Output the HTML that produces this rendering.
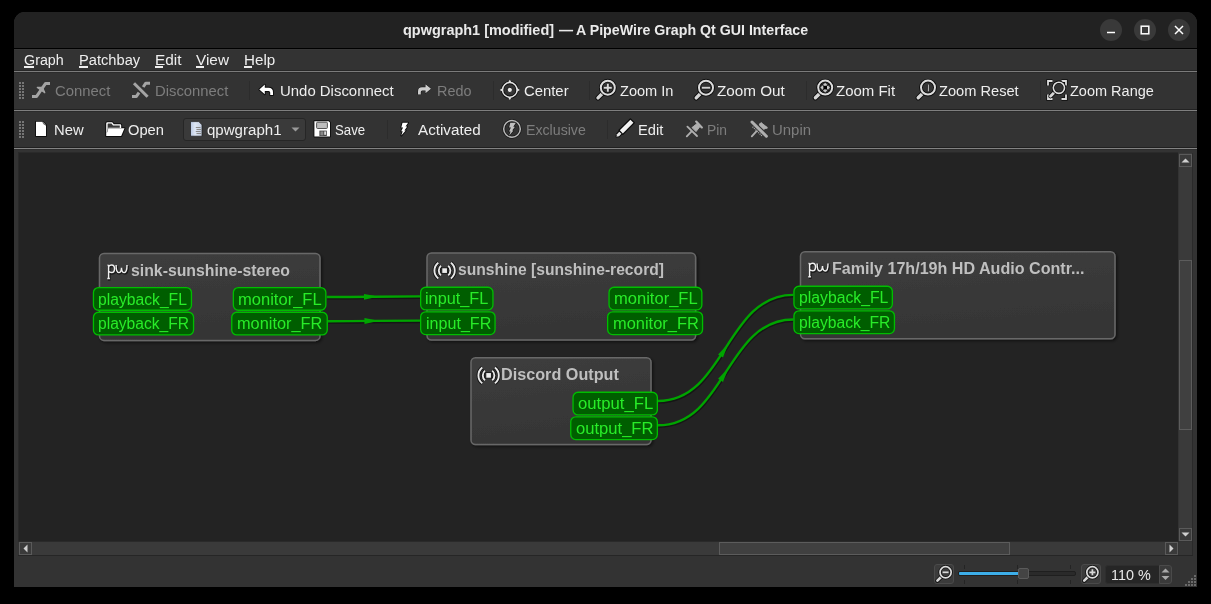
<!DOCTYPE html><html><head><meta charset="utf-8"><style>
html,body{margin:0;padding:0}
body{width:1211px;height:604px;background:#000;position:relative;overflow:hidden;font-family:"Liberation Sans",sans-serif}
body>div{position:absolute}
.t{position:absolute;white-space:nowrap;line-height:1;transform-origin:0 0}
svg{position:absolute;overflow:visible}
</style></head><body>
<div style="left:14px;top:12px;width:1183px;height:575px;background:#333333;border-radius:11px 11px 0 0"></div>
<div style="left:14px;top:12px;width:1183px;height:36px;background:#222222;border-radius:11px 11px 0 0"></div>
<div style="left:14px;top:48px;width:1183px;height:1px;background:#000000;"></div>
<div style="left:14px;top:49px;width:1183px;height:1px;background:#383838;"></div>
<div style="left:14px;top:70px;width:1183px;height:1px;background:#272727;"></div>
<div style="left:14px;top:71px;width:1183px;height:1px;background:#7b7b7b;"></div>
<div style="left:14px;top:72px;width:1183px;height:1px;background:#2b2b2b;"></div>
<div style="left:14px;top:109px;width:1183px;height:1px;background:#222222;"></div>
<div style="left:14px;top:110px;width:1183px;height:1px;background:#7f7f7f;"></div>
<div style="left:14px;top:111px;width:1183px;height:1px;background:#2b2b2b;"></div>
<div style="left:14px;top:147px;width:1183px;height:1px;background:#202020;"></div>
<div style="left:14px;top:148px;width:1183px;height:1px;background:#838383;"></div>
<div style="left:14px;top:149px;width:1183px;height:1px;background:#2d2d2d;"></div>
<div class="t" style="left:403.30px;top:22.53px;font-size:14.67px;font-weight:bold;color:#eaeaea;transform:scaleX(0.9868);">qpwgraph1 [modified]</div>
<div class="t" style="left:558.50px;top:22.53px;font-size:14.67px;font-weight:bold;color:#eaeaea;transform:scaleX(0.9611);">—</div>
<div class="t" style="left:576.40px;top:22.53px;font-size:14.67px;font-weight:bold;color:#eaeaea;transform:scaleX(0.9688);">A PipeWire Graph Qt GUI Interface</div>
<div style="left:1100px;top:19px;width:22px;height:22px;border-radius:50%;background:#393939"></div>
<div style="left:1134px;top:19px;width:22px;height:22px;border-radius:50%;background:#393939"></div>
<div style="left:1168px;top:19px;width:22px;height:22px;border-radius:50%;background:#393939"></div>
<svg style="position:absolute;left:1100px;top:19px" width="22" height="22" viewBox="0 0 22 22"><line x1="7" y1="13.5" x2="15" y2="13.5" stroke="#fff" stroke-width="1.5"/></svg>
<svg style="position:absolute;left:1134px;top:19px" width="22" height="22" viewBox="0 0 22 22"><rect x="7.2" y="7.2" width="7.6" height="7.6" fill="none" stroke="#fff" stroke-width="1.5"/></svg>
<svg style="position:absolute;left:1168px;top:19px" width="22" height="22" viewBox="0 0 22 22"><path d="M7 7L15 15M15 7L7 15" stroke="#fff" stroke-width="1.5"/></svg>
<div class="t" style="left:24.40px;top:52.53px;font-size:14.67px;font-weight:normal;color:#eeeeee;transform:scaleX(0.9759);">Graph</div>
<div style="left:24px;top:66px;width:10px;height:2px;background:#eeeeee;"></div>
<div class="t" style="left:79.30px;top:52.53px;font-size:14.67px;font-weight:normal;color:#eeeeee;transform:scaleX(1.0004);">Patchbay</div>
<div style="left:79px;top:66px;width:9px;height:2px;background:#eeeeee;"></div>
<div class="t" style="left:155.20px;top:52.53px;font-size:14.67px;font-weight:normal;color:#eeeeee;transform:scaleX(1.0511);">Edit</div>
<div style="left:155px;top:66px;width:8px;height:2px;background:#eeeeee;"></div>
<div class="t" style="left:196.20px;top:52.53px;font-size:14.67px;font-weight:normal;color:#eeeeee;transform:scaleX(1.0463);">View</div>
<div style="left:196px;top:66px;width:8px;height:2px;background:#eeeeee;"></div>
<div class="t" style="left:244.20px;top:52.53px;font-size:14.67px;font-weight:normal;color:#eeeeee;transform:scaleX(1.0349);">Help</div>
<div style="left:244px;top:66px;width:8px;height:2px;background:#eeeeee;"></div>
<div style="left:19px;top:82px;width:2px;height:2px;background:#767676;"></div>
<div style="left:22px;top:82px;width:2px;height:2px;background:#767676;"></div>
<div style="left:19px;top:85px;width:2px;height:2px;background:#767676;"></div>
<div style="left:22px;top:85px;width:2px;height:2px;background:#767676;"></div>
<div style="left:19px;top:88px;width:2px;height:2px;background:#767676;"></div>
<div style="left:22px;top:88px;width:2px;height:2px;background:#767676;"></div>
<div style="left:19px;top:91px;width:2px;height:2px;background:#767676;"></div>
<div style="left:22px;top:91px;width:2px;height:2px;background:#767676;"></div>
<div style="left:19px;top:94px;width:2px;height:2px;background:#767676;"></div>
<div style="left:22px;top:94px;width:2px;height:2px;background:#767676;"></div>
<div style="left:19px;top:97px;width:2px;height:2px;background:#767676;"></div>
<div style="left:22px;top:97px;width:2px;height:2px;background:#767676;"></div>
<div style="left:19px;top:121px;width:2px;height:2px;background:#767676;"></div>
<div style="left:22px;top:121px;width:2px;height:2px;background:#767676;"></div>
<div style="left:19px;top:124px;width:2px;height:2px;background:#767676;"></div>
<div style="left:22px;top:124px;width:2px;height:2px;background:#767676;"></div>
<div style="left:19px;top:127px;width:2px;height:2px;background:#767676;"></div>
<div style="left:22px;top:127px;width:2px;height:2px;background:#767676;"></div>
<div style="left:19px;top:130px;width:2px;height:2px;background:#767676;"></div>
<div style="left:22px;top:130px;width:2px;height:2px;background:#767676;"></div>
<div style="left:19px;top:133px;width:2px;height:2px;background:#767676;"></div>
<div style="left:22px;top:133px;width:2px;height:2px;background:#767676;"></div>
<div style="left:19px;top:136px;width:2px;height:2px;background:#767676;"></div>
<div style="left:22px;top:136px;width:2px;height:2px;background:#767676;"></div>
<div style="left:249px;top:81px;width:1px;height:19px;background:#2c2c2c;"></div>
<div style="left:493px;top:81px;width:1px;height:19px;background:#2c2c2c;"></div>
<div style="left:589px;top:81px;width:1px;height:19px;background:#2c2c2c;"></div>
<div style="left:806px;top:81px;width:1px;height:19px;background:#2c2c2c;"></div>
<div style="left:1040px;top:81px;width:1px;height:19px;background:#2c2c2c;"></div>
<div style="left:387px;top:120px;width:1px;height:19px;background:#2c2c2c;"></div>
<div style="left:607px;top:120px;width:1px;height:19px;background:#2c2c2c;"></div>
<div class="t" style="left:54.60px;top:83.53px;font-size:14.67px;font-weight:normal;color:#7d7d7d;transform:scaleX(1.0138);">Connect</div>
<div class="t" style="left:155.00px;top:83.53px;font-size:14.67px;font-weight:normal;color:#7d7d7d;transform:scaleX(1.0118);">Disconnect</div>
<div class="t" style="left:279.50px;top:83.53px;font-size:14.67px;font-weight:normal;color:#eeeeee;transform:scaleX(1.0187);">Undo Disconnect</div>
<div class="t" style="left:437.30px;top:83.53px;font-size:14.67px;font-weight:normal;color:#7d7d7d;transform:scaleX(0.9840);">Redo</div>
<div class="t" style="left:523.60px;top:83.53px;font-size:14.67px;font-weight:normal;color:#eeeeee;transform:scaleX(1.0134);">Center</div>
<div class="t" style="left:619.60px;top:83.53px;font-size:14.67px;font-weight:normal;color:#eeeeee;transform:scaleX(0.9937);">Zoom In</div>
<div class="t" style="left:717.30px;top:83.53px;font-size:14.67px;font-weight:normal;color:#eeeeee;transform:scaleX(1.0397);">Zoom Out</div>
<div class="t" style="left:836.40px;top:83.53px;font-size:14.67px;font-weight:normal;color:#eeeeee;transform:scaleX(1.0212);">Zoom Fit</div>
<div class="t" style="left:939.30px;top:83.53px;font-size:14.67px;font-weight:normal;color:#eeeeee;transform:scaleX(0.9978);">Zoom Reset</div>
<div class="t" style="left:1070.00px;top:83.53px;font-size:14.67px;font-weight:normal;color:#eeeeee;transform:scaleX(0.9895);">Zoom Range</div>
<div class="t" style="left:54.40px;top:122.53px;font-size:14.67px;font-weight:normal;color:#eeeeee;transform:scaleX(1.0097);">New</div>
<div class="t" style="left:128.40px;top:122.53px;font-size:14.67px;font-weight:normal;color:#eeeeee;transform:scaleX(1.0037);">Open</div>
<div class="t" style="left:335.20px;top:122.53px;font-size:14.67px;font-weight:normal;color:#eeeeee;transform:scaleX(0.9029);">Save</div>
<div class="t" style="left:417.50px;top:122.53px;font-size:14.67px;font-weight:normal;color:#eeeeee;transform:scaleX(1.0386);">Activated</div>
<div class="t" style="left:525.70px;top:122.53px;font-size:14.67px;font-weight:normal;color:#7d7d7d;transform:scaleX(0.9664);">Exclusive</div>
<div class="t" style="left:637.60px;top:122.53px;font-size:14.67px;font-weight:normal;color:#eeeeee;transform:scaleX(0.9998);">Edit</div>
<div class="t" style="left:707.30px;top:122.53px;font-size:14.67px;font-weight:normal;color:#7d7d7d;transform:scaleX(0.9435);">Pin</div>
<div class="t" style="left:771.90px;top:122.53px;font-size:14.67px;font-weight:normal;color:#7d7d7d;transform:scaleX(1.0192);">Unpin</div>
<div style="left:183px;top:118px;width:121px;height:21px;background:#3a3a3a;border:1px solid #262626;border-radius:3px"></div>
<div class="t" style="left:207.20px;top:122.53px;font-size:14.67px;font-weight:normal;color:#eeeeee;transform:scaleX(1.0273);">qpwgraph1</div>
<svg style="position:absolute;left:290px;top:126px" width="12" height="8" viewBox="0 0 12 8"><path d="M1.5 1.5L9.5 1.5L5.5 5.5Z" fill="#9a9a9a"/></svg>
<svg style="left:0;top:0" width="1211" height="604"><g opacity="0.85"><path d="M32 96.4H36.6L45.6 83.4H50" fill="none" stroke="#b8b8b8" stroke-width="3" stroke-linejoin="round"/><path d="M37.3 87.4L42.6 87.4L44.8 92.8Z" fill="#b8b8b8" stroke="#b8b8b8" stroke-width="1.2" stroke-linejoin="round"/></g><g opacity="0.85"><path d="M134 83.2L147.6 96.7" fill="none" stroke="#b8b8b8" stroke-width="3"/><path d="M143.2 87L145.8 83.2H150" fill="none" stroke="#b8b8b8" stroke-width="3" stroke-linejoin="round"/><path d="M132 96.4H136.4L139 92.6" fill="none" stroke="#b8b8b8" stroke-width="3" stroke-linejoin="round"/></g><path d="M259.3 89.5L264.8 84.6V87.7H268.5Q273 87.7 273 92.2V95H270.2V92.5Q270.2 91 268.6 91H264.8V94.3Z" fill="#000" stroke="#000" stroke-width="1.8" stroke-linejoin="round" opacity="0.75"/><path d="M259.3 89.5L264.8 84.6V87.7H268.5Q273 87.7 273 92.2V95H270.2V92.5Q270.2 91 268.6 91H264.8V94.3Z" fill="#ffffff" stroke="none" /><g opacity="0.85"><path d="M431 88.7L425.5 84.3V87.3H422Q418 87.3 418 91.5V94.5H420.8V92Q420.8 90.5 422.2 90.5H425.5V93.3Z" fill="#000" stroke="#000" stroke-width="1.0" stroke-linejoin="round" opacity="0.75"/><path d="M431 88.7L425.5 84.3V87.3H422Q418 87.3 418 91.5V94.5H420.8V92Q420.8 90.5 422.2 90.5H425.5V93.3Z" fill="#e8e8e8" stroke="none" /></g><circle cx="509.8" cy="89.9" r="7.3" fill="none" stroke="#000" stroke-width="3.2" opacity="0.75"/><circle cx="509.8" cy="89.9" r="7.3" fill="none" stroke="#e4e4e4" stroke-width="1.5"/><path d="M509.8 79.8L511.6 82.6H508Z M509.8 100L511.6 97.2H508Z M499.8 89.9L502.6 88.1V91.7Z M519.8 89.9L517 88.1V91.7Z" fill="#e4e4e4"/><circle cx="509.8" cy="89.9" r="2.6" fill="#e8e8e8" stroke="#000" stroke-width="0.8"/><path d="M598.0 97.9L602.5999999999999 93.3" stroke="#000" stroke-width="5.2" stroke-linecap="round" opacity="0.75"/><path d="M598.0 97.9L602.5999999999999 93.3" stroke="#d6d6d6" stroke-width="3.4" stroke-linecap="round"/><circle cx="607.8" cy="87.7" r="7" fill="none" stroke="#000" stroke-width="3.8" opacity="0.8"/><circle cx="607.8" cy="87.7" r="7" fill="none" stroke="#dcdcdc" stroke-width="2"/><path d="M603.8 87.7H611.8M607.8 83.7V91.7" stroke="#000" stroke-width="3.6" opacity="0.6"/><path d="M603.8 87.7H611.8M607.8 83.7V91.7" stroke="#d8d8d8" stroke-width="2"/><path d="M696.2 97.9L700.8 93.3" stroke="#000" stroke-width="5.2" stroke-linecap="round" opacity="0.75"/><path d="M696.2 97.9L700.8 93.3" stroke="#d6d6d6" stroke-width="3.4" stroke-linecap="round"/><circle cx="706" cy="87.7" r="7" fill="none" stroke="#000" stroke-width="3.8" opacity="0.8"/><circle cx="706" cy="87.7" r="7" fill="none" stroke="#dcdcdc" stroke-width="2"/><path d="M701.9 87.7H710.1" stroke="#000" stroke-width="3.6" opacity="0.6"/><path d="M701.9 87.7H710.1" stroke="#d0d0d0" stroke-width="2"/><path d="M815.4000000000001 97.8L820.0 93.19999999999999" stroke="#000" stroke-width="5.2" stroke-linecap="round" opacity="0.75"/><path d="M815.4000000000001 97.8L820.0 93.19999999999999" stroke="#d6d6d6" stroke-width="3.4" stroke-linecap="round"/><circle cx="825.2" cy="87.6" r="7" fill="none" stroke="#000" stroke-width="3.8" opacity="0.8"/><circle cx="825.2" cy="87.6" r="7" fill="none" stroke="#dcdcdc" stroke-width="2"/><path d="M825.2 82.8L830 87.6L825.2 92.4L820.4 87.6Z" fill="#c4c4c4"/><path d="M821.8 84.2L828.6 91M828.6 84.2L821.8 91" stroke="#000" stroke-width="0.9"/><rect x="823.4" y="85.8" width="3.6" height="3.6" fill="#000"/><path d="M918.2 97.8L922.8 93.19999999999999" stroke="#000" stroke-width="5.2" stroke-linecap="round" opacity="0.75"/><path d="M918.2 97.8L922.8 93.19999999999999" stroke="#d6d6d6" stroke-width="3.4" stroke-linecap="round"/><circle cx="928" cy="87.6" r="7" fill="none" stroke="#000" stroke-width="3.8" opacity="0.8"/><circle cx="928" cy="87.6" r="7" fill="none" stroke="#dcdcdc" stroke-width="2"/><path d="M927.6 84.8L929.2 83.6V91.8H927.4Z" fill="#d8d8d8" stroke="#000" stroke-width="0.6"/><path d="M1048 85.5V81H1052.5 M1061.5 81H1066V85.5 M1048 94.5V99H1052.5 M1061.5 99H1066V94.5" fill="none" stroke="#000" stroke-width="3.4" opacity="0.75"/><path d="M1048 85.5V81H1052.5 M1061.5 81H1066V85.5 M1048 94.5V99H1052.5 M1061.5 99H1066V94.5" fill="none" stroke="#dedede" stroke-width="1.8"/><path d="M1050.5 96.3L1054.2 92.6" stroke="#000" stroke-width="4.4" stroke-linecap="round" opacity="0.75"/><path d="M1050.5 96.3L1054.2 92.6" stroke="#d6d6d6" stroke-width="2.8" stroke-linecap="round"/><circle cx="1058.9" cy="87.8" r="5.6" fill="none" stroke="#000" stroke-width="3.2" opacity="0.8"/><circle cx="1058.9" cy="87.8" r="5.6" fill="none" stroke="#dedede" stroke-width="1.6"/><path d="M36 121.8H42.6L46 125.2V136H36Z" fill="#000" stroke="#000" stroke-width="1.8" stroke-linejoin="round" opacity="0.75"/><path d="M36 121.8H42.6L46 125.2V136H36Z" fill="#ffffff" stroke="none" /><path d="M42.6 121.8Q43.2 124.8 46 125.2" fill="#cfcfcf" stroke="#333" stroke-width="0.6"/><path d="M106.2 136V123.6Q106.2 122.3 107.5 122.3H112.2L113.8 124.2H120.2Q121.2 124.2 121.2 125.2V128H108.2L106.9 131.5V136Z M108 128.2H124.5L121.2 136H106.2Z" fill="#000" stroke="#000" stroke-width="2.0" stroke-linejoin="round" opacity="0.75"/><path d="M106.2 136V123.6Q106.2 122.3 107.5 122.3H112.2L113.8 124.2H120.2Q121.2 124.2 121.2 125.2V128H108.2L106.9 131.5V136Z M108 128.2H124.5L121.2 136H106.2Z" fill="#ffffff" stroke="none" /><path d="M107.6 133V124.2Q107.6 123.6 108.2 123.6H111.5L113 125.4H119.8V127.8H108.3Z" fill="#3a3a3a"/><path d="M108.6 129.4H123L120.5 134.6H107.4Z" fill="#ffffff"/><defs><linearGradient id="dg" x1="0" y1="0" x2="1" y2="0"><stop offset="0" stop-color="#b9c8e2"/><stop offset="0.4" stop-color="#dde6f4"/><stop offset="1" stop-color="#c2cde0"/></linearGradient></defs><path d="M190.5 121.6H198.8L202 124.8V136.2H190.5Z" fill="url(#dg)" stroke="#1a1a1a" stroke-width="0.7"/><path d="M195.8 127.5h4.8M196.5 129.5h5M195.8 131.5h4.8M196.5 133.5h5" stroke="#8a8a8a" stroke-width="1.2"/><path d="M314.4 121.2H328.6L330 122.6V136.6H314.4Z" fill="#000" stroke="#000" stroke-width="1.8" stroke-linejoin="round" opacity="0.75"/><path d="M314.4 121.2H328.6L330 122.6V136.6H314.4Z" fill="#ffffff" stroke="none" /><rect x="316.6" y="122.2" width="10.8" height="6.3" rx="1" fill="#bdbdbd" stroke="#444" stroke-width="0.9"/><rect x="319.4" y="130.6" width="7.4" height="5.4" fill="#444"/><rect x="320.4" y="131.4" width="3" height="4" fill="#888"/><rect x="324.2" y="131.4" width="1.8" height="3.4" fill="#ddd"/><path d="M402.5 122.7h5.6l-2.6 3.9h1.7l-2.8 3.9h1.3l-4.4 5.1 1.4-4.3h-1.5l1.9-3.9h-1.8z" fill="#000" stroke="#000" stroke-width="1.8" stroke-linejoin="round" opacity="0.75"/><path d="M402.5 122.7h5.6l-2.6 3.9h1.7l-2.8 3.9h1.3l-4.4 5.1 1.4-4.3h-1.5l1.9-3.9h-1.8z" fill="#ffffff" stroke="none" /><g opacity="0.85"><circle cx="512" cy="128.9" r="8.3" fill="none" stroke="#000" stroke-width="3" opacity="0.6"/><circle cx="512" cy="128.9" r="8.3" fill="none" stroke="#d0d0d0" stroke-width="1.5"/><path d="M510.3 122.8h5.6l-2.6 3.9h1.7l-2.8 3.9h1.3l-4.4 5.1 1.4-4.3h-1.5l1.9-3.9h-1.8z" fill="#000" stroke="#000" stroke-width="1.2" stroke-linejoin="round" opacity="0.75"/><path d="M510.3 122.8h5.6l-2.6 3.9h1.7l-2.8 3.9h1.3l-4.4 5.1 1.4-4.3h-1.5l1.9-3.9h-1.8z" fill="#d8d8d8" stroke="none" /></g><g transform="translate(624.5 128.7) rotate(-45)"><path d="M-11.6 0L-9.2 -1.8H-5.5V1.8H-9.2Z M-5 -2.7H11V2.7H-5Z" fill="#000" stroke="#000" stroke-width="1.4" stroke-linejoin="round" opacity="0.8"/><path d="M-11.4 0L-9.2 -1.5H-5.8V1.5H-9.2Z" fill="#e6e6e6"/><rect x="-4.5" y="-2.15" width="15" height="4.3" fill="#f2f2f2"/></g><g opacity="0.8" fill="none" stroke="#cfcfcf"><path d="M696.2 121.6L701.8 127.4" stroke-width="2.2" stroke-linecap="round"/><path d="M697.2 123.5L692 127.6L696 131.6L700 126.4Z" fill="#cfcfcf" stroke-width="1"/><path d="M687.4 126.6L697 136" stroke-width="1.8" stroke-linecap="round"/><path d="M691.6 131.4L686.8 136.4" stroke-width="1.8" stroke-linecap="round"/></g><g opacity="0.8" fill="none" stroke="#cfcfcf"><path d="M752 122L766.4 136.2" stroke-width="3" stroke-linecap="round"/><path d="M760 124.2L766.6 127.8" stroke-width="2" stroke-linecap="round"/><path d="M761 122.5L759.6 125.5L763.8 129.4L767.2 127.4Z" fill="#cfcfcf" stroke-width="0.8"/><path d="M752.6 126.8L762 136" stroke-width="1.2" stroke-dasharray="1 1"/><path d="M756.6 131.2L751.8 136.4" stroke-width="1.8" stroke-linecap="round"/></g></svg>
<div style="left:18px;top:152px;width:1160px;height:389px;background:#232323;border-left:1px solid #292929;border-top:1px solid #2a2a2a;box-sizing:border-box"></div>
<div style="left:1179px;top:153px;width:13px;height:388px;background:#3a3a3a;"></div>
<div style="left:1192px;top:153px;width:1px;height:403px;background:#2a2a2a;"></div>
<div style="left:1179px;top:154px;width:13px;height:13px;background:#3a3a3a;border:1px solid #5a5a5a;box-sizing:border-box"></div>
<svg style="position:absolute;left:1179px;top:154px" width="13" height="13" viewBox="0 0 13 13"><path d="M2.5 8.5L10.5 8.5L6.5 4.5Z" fill="#cfcfcf"/></svg>
<div style="left:1179px;top:260px;width:13px;height:170px;background:#404040;border:1px solid #5c5c5c;box-sizing:border-box"></div>
<div style="left:1179px;top:528px;width:13px;height:13px;background:#3a3a3a;border:1px solid #5a5a5a;box-sizing:border-box"></div>
<svg style="position:absolute;left:1179px;top:528px" width="13" height="13" viewBox="0 0 13 13"><path d="M2.5 4.5L10.5 4.5L6.5 8.5Z" fill="#cfcfcf"/></svg>
<div style="left:18px;top:541px;width:1161px;height:1px;background:#2a2a2a;"></div>
<div style="left:19px;top:542px;width:1159px;height:13px;background:#3a3a3a;"></div>
<div style="left:18px;top:555px;width:1175px;height:1px;background:#262626;"></div>
<div style="left:19px;top:542px;width:13px;height:13px;background:#3a3a3a;border:1px solid #5a5a5a;box-sizing:border-box"></div>
<svg style="position:absolute;left:19px;top:542px" width="13" height="13" viewBox="0 0 13 13"><path d="M8.5 2.5L8.5 10.5L4.5 6.5Z" fill="#cfcfcf"/></svg>
<div style="left:719px;top:542px;width:291px;height:13px;background:#404040;border:1px solid #5c5c5c;box-sizing:border-box"></div>
<div style="left:1165px;top:542px;width:13px;height:13px;background:#3a3a3a;border:1px solid #5a5a5a;box-sizing:border-box"></div>
<svg style="position:absolute;left:1165px;top:542px" width="13" height="13" viewBox="0 0 13 13"><path d="M4.5 2.5L4.5 10.5L8.5 6.5Z" fill="#cfcfcf"/></svg>
<div style="left:1179px;top:542px;width:13px;height:13px;background:#363636;"></div>
<svg style="left:0;top:0" width="1211" height="604"><defs><filter id="sh" x="-10%" y="-20%" width="120%" height="140%"><feDropShadow dx="1.5" dy="1.5" stdDeviation="1.6" flood-color="#000" flood-opacity="0.55"/></filter><linearGradient id="ng" x1="0" y1="0" x2="0.25" y2="1"><stop offset="0" stop-color="#3d3d3d"/><stop offset="1" stop-color="#353535"/></linearGradient></defs><path d="M326.8 297.0C373.5 297.0 373.5 296.4 420.2 296.4" fill="none" stroke="#121212" stroke-width="2.6" transform="translate(0.5,1.3)" opacity="0.75"/><path d="M327.9 321.2C373.95 321.2 373.95 320.6 420.0 320.6" fill="none" stroke="#121212" stroke-width="2.6" transform="translate(0.5,1.3)" opacity="0.75"/><path d="M658 401C725.65 401 725.65 294.9 793.3 294.9" fill="none" stroke="#121212" stroke-width="2.6" transform="translate(0.5,1.3)" opacity="0.75"/><path d="M658 425.3C725.65 425.3 725.65 319.5 793.3 319.5" fill="none" stroke="#121212" stroke-width="2.6" transform="translate(0.5,1.3)" opacity="0.75"/><path d="M326.8 297.0C373.5 297.0 373.5 296.4 420.2 296.4" fill="none" stroke="#00a400" stroke-width="2.4"/><path d="M-9.5 -2.9L0.8 -0.9V0.9L-9.5 2.9Z" fill="#00a400" transform="translate(373.50,296.70) rotate(-0.7)"/><path d="M327.9 321.2C373.95 321.2 373.95 320.6 420.0 320.6" fill="none" stroke="#00a400" stroke-width="2.4"/><path d="M-9.5 -2.9L0.8 -0.9V0.9L-9.5 2.9Z" fill="#00a400" transform="translate(373.95,320.90) rotate(-0.7)"/><path d="M658 401C725.65 401 725.65 294.9 793.3 294.9" fill="none" stroke="#00a400" stroke-width="2.4"/><path d="M-9.5 -2.9L0.8 -0.9V0.9L-9.5 2.9Z" fill="#00a400" transform="translate(725.65,347.95) rotate(-57.5)"/><path d="M658 425.3C725.65 425.3 725.65 319.5 793.3 319.5" fill="none" stroke="#00a400" stroke-width="2.4"/><path d="M-9.5 -2.9L0.8 -0.9V0.9L-9.5 2.9Z" fill="#00a400" transform="translate(725.65,372.40) rotate(-57.4)"/><rect x="99.5" y="253.5" width="220.5" height="86.89999999999998" rx="4.5" ry="4.5" fill="url(#ng)" stroke="#686868" stroke-width="1.5" filter="url(#sh)"/><path d="M108.6 264.9V278.5 M107.3 278.5H109.89999999999999 M107.5 265.09999999999997H108.6 M108.6 266.5Q109.8 265.0 111.6 265.0Q114.5 265.0 114.5 268.7Q114.5 272.5 111.6 272.5Q109.8 272.5 108.6 271.29999999999995M116.1 265.09999999999997Q116.1 272.59999999999997 118.69999999999999 272.59999999999997Q121.3 272.59999999999997 121.5 267.7Q121.69999999999999 272.59999999999997 124.3 272.59999999999997Q127.0 272.59999999999997 127.0 265.09999999999997" fill="none" stroke="#000" stroke-width="2.8" opacity="0.55" transform="translate(0.6 0.8)"/><path d="M108.6 264.9V278.5 M107.3 278.5H109.89999999999999 M107.5 265.09999999999997H108.6 M108.6 266.5Q109.8 265.0 111.6 265.0Q114.5 265.0 114.5 268.7Q114.5 272.5 111.6 272.5Q109.8 272.5 108.6 271.29999999999995M116.1 265.09999999999997Q116.1 272.59999999999997 118.69999999999999 272.59999999999997Q121.3 272.59999999999997 121.5 267.7Q121.69999999999999 272.59999999999997 124.3 272.59999999999997Q127.0 272.59999999999997 127.0 265.09999999999997" fill="none" stroke="#f0f0f0" stroke-width="1.45"/><rect x="93.45" y="287.55" width="98.00" height="22.70" rx="5" ry="5" fill="#005e00" stroke="#00bd00" stroke-width="1.3"/><rect x="93.45" y="312.25" width="100.10" height="22.70" rx="5" ry="5" fill="#005e00" stroke="#00bd00" stroke-width="1.3"/><rect x="233.35" y="287.55" width="92.50" height="22.70" rx="5" ry="5" fill="#005e00" stroke="#00bd00" stroke-width="1.3"/><rect x="231.75" y="312.25" width="95.50" height="22.70" rx="5" ry="5" fill="#005e00" stroke="#00bd00" stroke-width="1.3"/><rect x="427" y="253.0" width="268.6" height="87.0" rx="4.5" ry="4.5" fill="url(#ng)" stroke="#686868" stroke-width="1.5" filter="url(#sh)"/><g transform="translate(444.6 270.6)"><path d="M-6.3 -7.9A10 10 0 0 0 -6.3 7.9M6.3 -7.9A10 10 0 0 1 6.3 7.9M-3.6 -4.8A6.3 6.3 0 0 0 -3.6 4.8M3.6 -4.8A6.3 6.3 0 0 1 3.6 4.8" fill="none" stroke="#000" stroke-width="3.6" opacity="0.75"/><path d="M-6.3 -7.9A10 10 0 0 0 -6.3 7.9M6.3 -7.9A10 10 0 0 1 6.3 7.9M-3.6 -4.8A6.3 6.3 0 0 0 -3.6 4.8M3.6 -4.8A6.3 6.3 0 0 1 3.6 4.8" fill="none" stroke="#e8e8e8" stroke-width="1.9"/><rect x="-2.8" y="-2.8" width="5.6" height="5.6" fill="#ececec" stroke="#111" stroke-width="0.9"/></g><rect x="420.65" y="287.25" width="72.30" height="22.70" rx="5" ry="5" fill="#005e00" stroke="#00bd00" stroke-width="1.3"/><rect x="420.65" y="311.85" width="74.40" height="22.70" rx="5" ry="5" fill="#005e00" stroke="#00bd00" stroke-width="1.3"/><rect x="609.05" y="287.25" width="92.80" height="22.70" rx="5" ry="5" fill="#005e00" stroke="#00bd00" stroke-width="1.3"/><rect x="607.65" y="311.85" width="94.90" height="22.70" rx="5" ry="5" fill="#005e00" stroke="#00bd00" stroke-width="1.3"/><rect x="471" y="357.8" width="180" height="86.80000000000001" rx="4.5" ry="4.5" fill="url(#ng)" stroke="#686868" stroke-width="1.5" filter="url(#sh)"/><g transform="translate(488.6 375.40000000000003)"><path d="M-6.3 -7.9A10 10 0 0 0 -6.3 7.9M6.3 -7.9A10 10 0 0 1 6.3 7.9M-3.6 -4.8A6.3 6.3 0 0 0 -3.6 4.8M3.6 -4.8A6.3 6.3 0 0 1 3.6 4.8" fill="none" stroke="#000" stroke-width="3.6" opacity="0.75"/><path d="M-6.3 -7.9A10 10 0 0 0 -6.3 7.9M6.3 -7.9A10 10 0 0 1 6.3 7.9M-3.6 -4.8A6.3 6.3 0 0 0 -3.6 4.8M3.6 -4.8A6.3 6.3 0 0 1 3.6 4.8" fill="none" stroke="#e8e8e8" stroke-width="1.9"/><rect x="-2.8" y="-2.8" width="5.6" height="5.6" fill="#ececec" stroke="#111" stroke-width="0.9"/></g><rect x="573.05" y="392.25" width="84.30" height="22.70" rx="5" ry="5" fill="#005e00" stroke="#00bd00" stroke-width="1.3"/><rect x="570.75" y="416.85" width="86.60" height="22.70" rx="5" ry="5" fill="#005e00" stroke="#00bd00" stroke-width="1.3"/><rect x="800.5" y="251.8" width="314.5" height="87.0" rx="4.5" ry="4.5" fill="url(#ng)" stroke="#686868" stroke-width="1.5" filter="url(#sh)"/><path d="M809.6 263.2V276.8 M808.3000000000001 276.8H810.9 M808.5 263.4H809.6 M809.6 264.8Q810.8000000000001 263.3 812.6 263.3Q815.5 263.3 815.5 267.0Q815.5 270.8 812.6 270.8Q810.8000000000001 270.8 809.6 269.59999999999997M817.1 263.4Q817.1 270.9 819.7 270.9Q822.3000000000001 270.9 822.5 266.0Q822.7 270.9 825.3000000000001 270.9Q828.0 270.9 828.0 263.4" fill="none" stroke="#000" stroke-width="2.8" opacity="0.55" transform="translate(0.6 0.8)"/><path d="M809.6 263.2V276.8 M808.3000000000001 276.8H810.9 M808.5 263.4H809.6 M809.6 264.8Q810.8000000000001 263.3 812.6 263.3Q815.5 263.3 815.5 267.0Q815.5 270.8 812.6 270.8Q810.8000000000001 270.8 809.6 269.59999999999997M817.1 263.4Q817.1 270.9 819.7 270.9Q822.3000000000001 270.9 822.5 266.0Q822.7 270.9 825.3000000000001 270.9Q828.0 270.9 828.0 263.4" fill="none" stroke="#f0f0f0" stroke-width="1.45"/><rect x="793.95" y="286.25" width="98.40" height="22.70" rx="5" ry="5" fill="#005e00" stroke="#00bd00" stroke-width="1.3"/><rect x="793.95" y="310.85" width="100.50" height="22.70" rx="5" ry="5" fill="#005e00" stroke="#00bd00" stroke-width="1.3"/></svg>
<div class="t" style="left:130.60px;top:262.60px;font-size:16px;font-weight:bold;color:#bfbfbf;transform:scaleX(0.9878);">sink-sunshine-stereo</div>
<div class="t" style="left:98.30px;top:291.50px;font-size:16px;font-weight:normal;color:#28ec28;transform:scaleX(0.9799);">playback_FL</div>
<div class="t" style="left:98.30px;top:316.20px;font-size:16px;font-weight:normal;color:#28ec28;transform:scaleX(0.9747);">playback_FR</div>
<div class="t" style="left:238.00px;top:291.50px;font-size:16px;font-weight:normal;color:#28ec28;transform:scaleX(1.0338);">monitor_FL</div>
<div class="t" style="left:237.00px;top:316.20px;font-size:16px;font-weight:normal;color:#28ec28;transform:scaleX(1.0203);">monitor_FR</div>
<div class="t" style="left:457.90px;top:262.10px;font-size:16px;font-weight:bold;color:#bfbfbf;transform:scaleX(0.9776);">sunshine [sunshine-record]</div>
<div class="t" style="left:425.40px;top:291.20px;font-size:16px;font-weight:normal;color:#28ec28;transform:scaleX(1.0170);">input_FL</div>
<div class="t" style="left:425.50px;top:315.80px;font-size:16px;font-weight:normal;color:#28ec28;transform:scaleX(1.0052);">input_FR</div>
<div class="t" style="left:613.90px;top:291.20px;font-size:16px;font-weight:normal;color:#28ec28;transform:scaleX(1.0338);">monitor_FL</div>
<div class="t" style="left:612.50px;top:315.80px;font-size:16px;font-weight:normal;color:#28ec28;transform:scaleX(1.0263);">monitor_FR</div>
<div class="t" style="left:501.30px;top:366.90px;font-size:16px;font-weight:bold;color:#bfbfbf;transform:scaleX(1.0122);">Discord Output</div>
<div class="t" style="left:577.90px;top:396.20px;font-size:16px;font-weight:normal;color:#28ec28;transform:scaleX(1.0433);">output_FL</div>
<div class="t" style="left:575.60px;top:420.80px;font-size:16px;font-weight:normal;color:#28ec28;transform:scaleX(1.0372);">output_FR</div>
<div class="t" style="left:831.70px;top:260.90px;font-size:16px;font-weight:bold;color:#bfbfbf;transform:scaleX(1.0058);">Family 17h/19h HD Audio Contr...</div>
<div class="t" style="left:798.80px;top:290.20px;font-size:16px;font-weight:normal;color:#28ec28;transform:scaleX(0.9843);">playback_FL</div>
<div class="t" style="left:798.80px;top:314.80px;font-size:16px;font-weight:normal;color:#28ec28;transform:scaleX(0.9790);">playback_FR</div>
<div style="left:934px;top:564px;width:20px;height:20px;background:#3b3b3b;border:1px solid #4a4a4a;border-radius:3px;box-sizing:border-box"></div>
<div style="left:1081px;top:564px;width:20px;height:20px;background:#3b3b3b;border:1px solid #4a4a4a;border-radius:3px;box-sizing:border-box"></div>
<div style="left:958px;top:571px;width:118px;height:5px;background:#2a2a2a;border:1px solid #1f1f1f;border-radius:2px;box-sizing:border-box"></div>
<svg style="left:0;top:0" width="1211" height="604"><path d="M937.4 580.6999999999999L941.6 576.5" stroke="#000" stroke-width="4.2" stroke-linecap="round" opacity="0.7"/><path d="M937.4 580.6999999999999L941.6 576.5" stroke="#d8d8d8" stroke-width="2.6" stroke-linecap="round"/><circle cx="945.6" cy="572.3" r="5.6" fill="none" stroke="#000" stroke-width="3.2" opacity="0.75"/><circle cx="945.6" cy="572.3" r="5.6" fill="none" stroke="#dcdcdc" stroke-width="1.7"/><path d="M942.6 572.3H948.6" stroke="#d8d8d8" stroke-width="1.7"/><path d="M1084.2 580.6999999999999L1088.4 576.5" stroke="#000" stroke-width="4.2" stroke-linecap="round" opacity="0.7"/><path d="M1084.2 580.6999999999999L1088.4 576.5" stroke="#d8d8d8" stroke-width="2.6" stroke-linecap="round"/><circle cx="1092.4" cy="572.3" r="5.6" fill="none" stroke="#000" stroke-width="3.2" opacity="0.75"/><circle cx="1092.4" cy="572.3" r="5.6" fill="none" stroke="#dcdcdc" stroke-width="1.7"/><path d="M1089.4 572.3H1095.4M1092.4 569.3V575.3" stroke="#d8d8d8" stroke-width="1.7"/></svg>
<div style="left:959px;top:572px;width:60px;height:3px;background:#3daee9;border-radius:1px"></div>
<div style="left:964px;top:565px;width:1px;height:4px;background:#242424;"></div>
<div style="left:964px;top:580px;width:1px;height:4px;background:#242424;"></div>
<div style="left:1017px;top:565px;width:1px;height:4px;background:#242424;"></div>
<div style="left:1017px;top:580px;width:1px;height:4px;background:#242424;"></div>
<div style="left:1070px;top:565px;width:1px;height:4px;background:#242424;"></div>
<div style="left:1070px;top:580px;width:1px;height:4px;background:#242424;"></div>
<div style="left:1018px;top:568px;width:11px;height:11px;background:#444444;border:1px solid #5a5a5a;border-radius:2px;box-sizing:border-box"></div>
<div style="left:1105px;top:565px;width:67px;height:19px;background:#262626;border:1px solid #2e2e2e;border-radius:3px;box-sizing:border-box"></div>
<div style="left:1159px;top:565px;width:13px;height:19px;background:#3a3a3a;border:1px solid #4a4a4a;border-radius:0 3px 3px 0;box-sizing:border-box"></div>
<svg style="position:absolute;left:1159px;top:565px" width="13" height="19" viewBox="0 0 13 19"><path d="M2.5 7.5L10.5 7.5L6.5 3.5Z" fill="#aaa"/><path d="M2.5 11L10.5 11L6.5 15Z" fill="#aaa"/></svg>
<div class="t" style="left:1111.00px;top:567.53px;font-size:14.67px;font-weight:normal;color:#e8e8e8;transform:scaleX(0.9805);">110 %</div>
<div style="left:1194px;top:575px;width:2px;height:2px;background:#6a6a6a;"></div>
<div style="left:1191px;top:578px;width:2px;height:2px;background:#6a6a6a;"></div>
<div style="left:1194px;top:578px;width:2px;height:2px;background:#6a6a6a;"></div>
<div style="left:1188px;top:581px;width:2px;height:2px;background:#6a6a6a;"></div>
<div style="left:1191px;top:581px;width:2px;height:2px;background:#6a6a6a;"></div>
<div style="left:1194px;top:581px;width:2px;height:2px;background:#6a6a6a;"></div>
<div style="left:1185px;top:584px;width:2px;height:2px;background:#6a6a6a;"></div>
<div style="left:1188px;top:584px;width:2px;height:2px;background:#6a6a6a;"></div>
<div style="left:1191px;top:584px;width:2px;height:2px;background:#6a6a6a;"></div>
<div style="left:1194px;top:584px;width:2px;height:2px;background:#6a6a6a;"></div>
</body></html>
